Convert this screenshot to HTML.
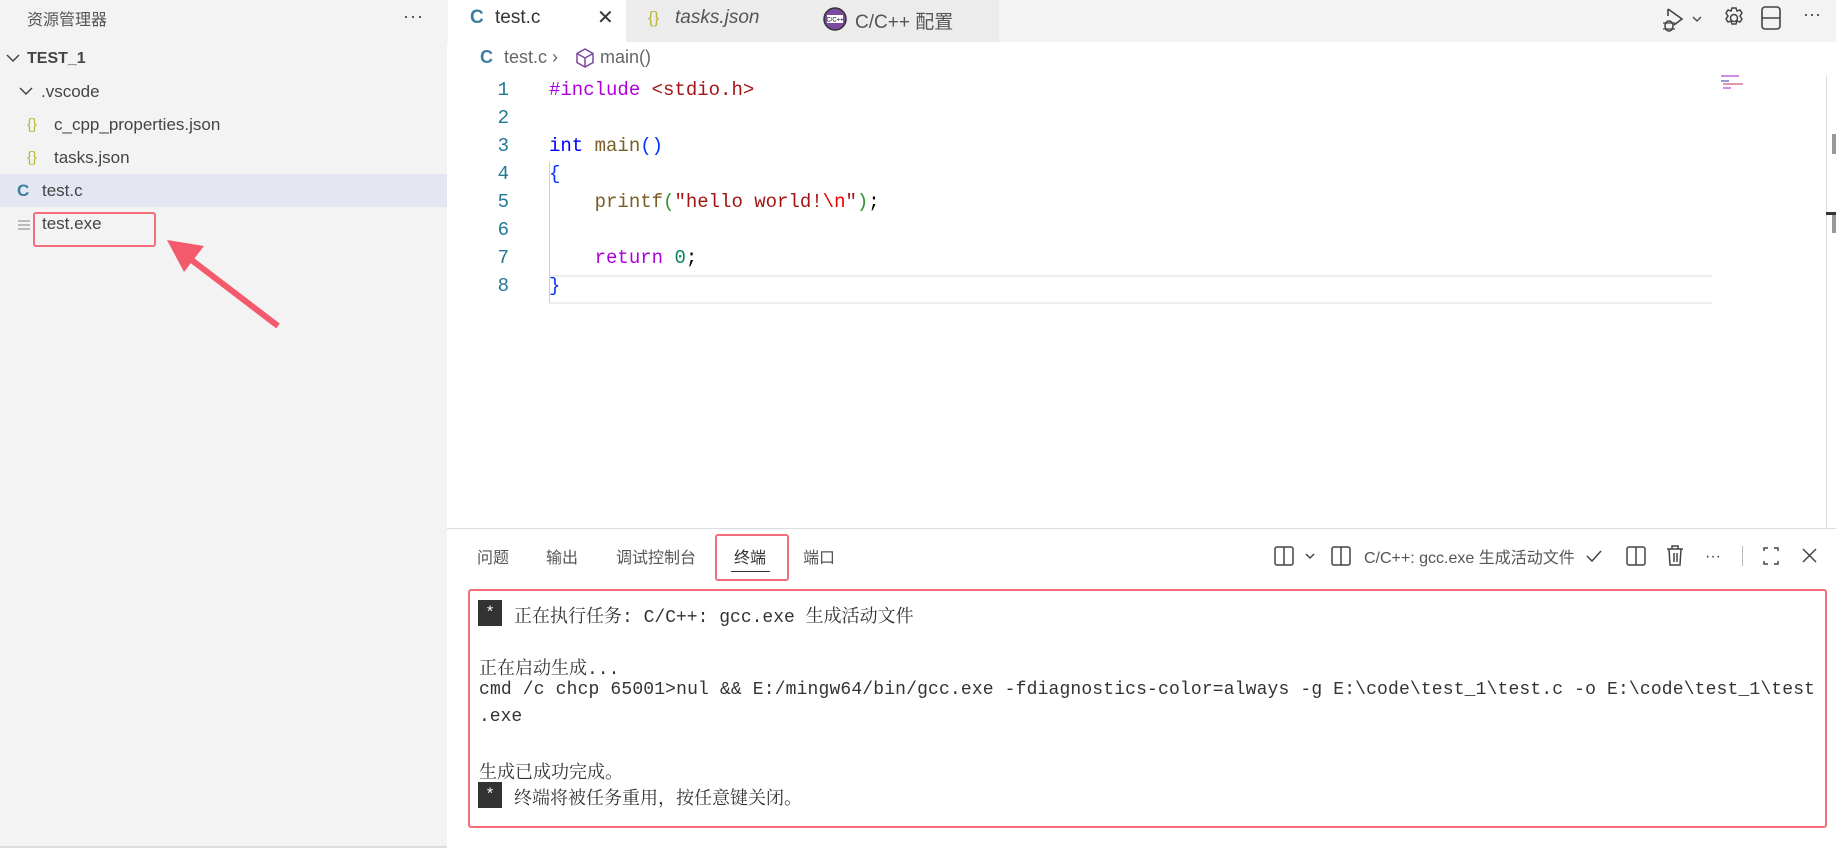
<!DOCTYPE html>
<html><head><meta charset="utf-8"><style>
*{margin:0;padding:0;box-sizing:border-box}
body{width:1836px;height:848px;overflow:hidden;background:#fff;font-family:"Liberation Sans","Noto Sans CJK SC",sans-serif;position:relative;color:#333}
.abs{position:absolute;white-space:nowrap}
.side{left:0;top:0;width:447px;height:848px;background:#f3f3f3;border-bottom:2px solid #ddd}
.row{position:absolute;left:0;width:447px;height:33px;line-height:33px;font-size:17px;color:#444}
.mono{font-family:"Liberation Mono","Noto Sans CJK SC",monospace}
.code{font-size:19px;line-height:28px}
.term{font-size:18px;color:#333;left:479px;font-family:"Liberation Mono","Noto Serif CJK SC",monospace}
.ptab{font-size:16px;color:#555;top:544px}
</style></head><body>
<div class="abs side"></div>
<div class="abs" style="left:27px;top:6px;font-size:16px;color:#555">资源管理器</div>
<div class="abs" style="left:403px;top:6px;font-size:18px;color:#444;letter-spacing:1px">···</div>
<div class="row" style="top:42px"><svg style="position:absolute;left:6px;top:11px" width="14" height="10"><path d="M1 2l6 6 6-6" stroke="#444" stroke-width="1.5" fill="none"/></svg><span style="position:absolute;left:27px;font-weight:bold;font-size:16px">TEST_1</span></div>
<div class="row" style="top:75px"><svg style="position:absolute;left:19px;top:11px" width="14" height="10"><path d="M1 2l6 6 6-6" stroke="#444" stroke-width="1.5" fill="none"/></svg><span style="position:absolute;left:41px">.vscode</span></div>
<div class="row" style="top:108px"><span style="position:absolute;left:27px;color:#b8b83a;font-size:15px">{}</span><span style="position:absolute;left:54px">c_cpp_properties.json</span></div>
<div class="row" style="top:141px"><span style="position:absolute;left:27px;color:#b8b83a;font-size:15px">{}</span><span style="position:absolute;left:54px">tasks.json</span></div>
<div class="row" style="top:174px;background:#e4e6f1"><span style="position:absolute;left:17px;color:#3d7ea0;font-weight:bold">C</span><span style="position:absolute;left:42px">test.c</span></div>
<div class="row" style="top:207px"><span style="position:absolute;left:18px;top:13px;width:12px;height:2px;background:#bbb;box-shadow:0 4px 0 #bbb,0 8px 0 #bbb"></span><span style="position:absolute;left:42px">test.exe</span></div>
<div class="abs" style="left:33px;top:212px;width:123px;height:35px;border:2px solid #f36d7b;border-radius:3px"></div>
<svg class="abs" style="left:0;top:0" width="447" height="400"><line x1="278" y1="326" x2="185" y2="255" stroke="#f35a6c" stroke-width="6"/><path d="M167 240 L204 246 L184 272 Z" fill="#f35a6c"/></svg>

<!-- tabs -->
<div class="abs" style="left:447px;top:0;width:1389px;height:42px;background:#f3f3f3"></div>
<div class="abs" style="left:448px;top:0;width:178px;height:42px;background:#fff"></div>
<div class="abs" style="left:626px;top:0;width:181px;height:42px;background:#ececec"></div>
<div class="abs" style="left:807px;top:0;width:192px;height:42px;background:#ececec"></div>
<div class="abs" style="left:470px;top:7px;font-size:19px;color:#3d7ea0;font-weight:bold">C</div>
<div class="abs" style="left:495px;top:7px;font-size:19px;color:#333">test.c</div>
<div class="abs" style="left:597px;top:5px;font-size:20px;color:#333">✕</div>
<div class="abs" style="left:648px;top:8px;font-size:17px;color:#b8b83a">{}</div>
<div class="abs" style="left:675px;top:7px;font-size:19px;color:#555;font-style:italic">tasks.json</div>
<svg class="abs" style="left:822px;top:6px" width="26" height="26"><circle cx="13" cy="13" r="11" fill="#7b4aa1" stroke="#333" stroke-width="1.5"/><rect x="5" y="9" width="16" height="8" fill="#fff"/><text x="13" y="15.5" font-size="6" text-anchor="middle" font-family="Liberation Sans">C/C++</text></svg>
<div class="abs" style="left:855px;top:7px;font-size:19px;color:#555">C/C++ 配置</div>
<svg class="abs" style="left:1658px;top:5px" width="60" height="30"><path d="M10 4 L24 14 L16 20" stroke="#444" stroke-width="1.6" fill="none"/><path d="M10 4v7" stroke="#444" stroke-width="1.6"/><ellipse cx="11" cy="21" rx="4" ry="5" stroke="#444" stroke-width="1.5" fill="none"/><path d="M5 18h12M5 24h12" stroke="#444" stroke-width="1.2"/><path d="M35 12l4 4 4-4" stroke="#444" stroke-width="1.3" fill="none"/></svg>
<svg class="abs" style="left:1721px;top:5px" width="26" height="26"><circle cx="13" cy="13" r="3.5" stroke="#444" stroke-width="1.5" fill="none"/><path d="M11 3h4l1 3 3-1 2 3-2 3 2 3-2 3-3-1-1 3h-4l-1-3-3 1-2-3 2-3-2-3 2-3 3 1z" stroke="#444" stroke-width="1.5" fill="none"/></svg>
<svg class="abs" style="left:1760px;top:5px" width="24" height="26"><rect x="2" y="2" width="18" height="22" rx="3" stroke="#444" stroke-width="1.6" fill="none"/><path d="M2 13h18" stroke="#444" stroke-width="1.6"/></svg>
<div class="abs" style="left:1803px;top:4px;font-size:18px;color:#444">···</div>

<!-- breadcrumb -->
<div class="abs" style="left:480px;top:47px;font-size:18px;color:#3d7ea0;font-weight:bold">C</div>
<div class="abs" style="left:504px;top:47px;font-size:18px;color:#666">test.c ›</div>
<svg class="abs" style="left:574px;top:47px" width="22" height="22"><path d="M11 2 L19 6.5 V15.5 L11 20 L3 15.5 V6.5 Z M3 6.5 L11 11 L19 6.5 M11 11 V20" stroke="#7b4aa1" stroke-width="1.5" fill="none"/></svg>
<div class="abs" style="left:600px;top:47px;font-size:18px;color:#666">main()</div>

<!-- editor -->
<div class="abs" style="left:549px;top:275px;width:1163px;height:29px;border-top:2px solid #eee;border-bottom:2px solid #eee"></div>
<div class="abs" style="left:549px;top:162px;width:1px;height:141px;background:#ccc"></div>
<div class="abs mono code" style="left:449px;top:76px;width:60px;text-align:right;color:#237893">1<br>2<br>3<br>4<br>5<br>6<br>7<br>8</div>
<div class="abs mono code" style="left:549px;top:76px;color:#000;white-space:pre"><span style="color:#af00db">#include</span> <span style="color:#a31515">&lt;stdio.h&gt;</span>

<span style="color:#0000ff">int</span> <span style="color:#795e26">main</span><span style="color:#0431fa">()</span>
<span style="color:#0431fa">{</span>
    <span style="color:#795e26">printf</span><span style="color:#319331">(</span><span style="color:#a31515">"hello world!</span><span style="color:#ee0000">\n</span><span style="color:#a31515">"</span><span style="color:#319331">)</span>;

    <span style="color:#af00db">return</span> <span style="color:#098658">0</span>;
<span style="color:#0431fa">}</span></div>
<div class="abs" style="left:1721px;top:75px;width:18px;height:2px;background:#d58ee6"></div>
<div class="abs" style="left:1721px;top:80px;width:8px;height:2px;background:#99c"></div>
<div class="abs" style="left:1723px;top:83px;width:20px;height:2px;background:#d9a"></div>
<div class="abs" style="left:1723px;top:87px;width:8px;height:2px;background:#d58ee6"></div>
<div class="abs" style="left:1826px;top:75px;width:1px;height:453px;background:#ddd"></div>
<div class="abs" style="left:1832px;top:134px;width:4px;height:20px;background:#999"></div>
<div class="abs" style="left:1826px;top:212px;width:10px;height:3px;background:#333"></div>
<div class="abs" style="left:1832px;top:215px;width:4px;height:18px;background:#999"></div>

<!-- panel -->
<div class="abs" style="left:447px;top:528px;width:1389px;height:1px;background:#ddd"></div>
<div class="abs ptab" style="left:477px">问题</div>
<div class="abs ptab" style="left:546px">输出</div>
<div class="abs ptab" style="left:616px">调试控制台</div>
<div class="abs ptab" style="left:734px;color:#333">终端</div>
<div class="abs" style="left:731px;top:571px;width:39px;height:1px;background:#333"></div>
<div class="abs ptab" style="left:803px">端口</div>
<div class="abs" style="left:715px;top:534px;width:74px;height:47px;border:2px solid #f36d7b;border-radius:3px"></div>
<svg class="abs" style="left:1270px;top:543px" width="566" height="26">
<g stroke="#444" stroke-width="1.5" fill="none">
<rect x="5" y="4" width="18" height="18" rx="2"/><path d="M14 4v18"/>
<path d="M36 11l4 4 4-4"/>
<rect x="62" y="4" width="18" height="18" rx="2"/><path d="M71 4v18"/>
<path d="M317 13l5 5 9-10"/>
<rect x="357" y="4" width="18" height="18" rx="2"/><path d="M366 4v18"/>
<path d="M397 6h16M402 6V3h6v3M399 6l1 16h10l1-16M404 10v9M407 10v9"/>
<path d="M494 8V5h4M504 5h4v3M508 18v3h-4M498 21h-4v-3"/>
<path d="M533 6l13 13M546 6l-13 13"/>
</g>
<rect x="472" y="3" width="1" height="20" fill="#bbb"/>
<text x="94" y="20" font-size="16" fill="#555" font-family="Liberation Sans, Noto Sans CJK SC, sans-serif">C/C++: gcc.exe 生成活动文件</text>
<text x="435" y="18" font-size="16" fill="#444" font-family="Liberation Sans">···</text>
</svg>

<!-- terminal -->
<div class="abs" style="left:468px;top:589px;width:1359px;height:239px;border:2px solid #f36d7b;border-radius:3px"></div>
<div class="abs" style="left:478px;top:600px;height:26px;background:#333;color:#fff;font-size:16px;text-align:center;line-height:26px;font-family:'Liberation Mono';width:24px">*</div>
<div class="abs term" style="left:514px;top:602px">正在执行任务: C/C++: gcc.exe 生成活动文件</div>
<div class="abs term" style="top:654px">正在启动生成...</div>
<div class="abs term" style="top:680px;letter-spacing:0.15px">cmd /c chcp 65001&gt;nul &amp;&amp; E:/mingw64/bin/gcc.exe -fdiagnostics-color=always -g E:\code\test_1\test.c -o E:\code\test_1\test</div>
<div class="abs term" style="top:707px">.exe</div>
<div class="abs term" style="top:758px">生成已成功完成。</div>
<div class="abs" style="left:478px;top:782px;height:26px;background:#333;color:#fff;font-size:16px;text-align:center;line-height:26px;font-family:'Liberation Mono';width:24px">*</div>
<div class="abs term" style="left:514px;top:784px">终端将被任务重用，按任意键关闭。</div>
</body></html>
